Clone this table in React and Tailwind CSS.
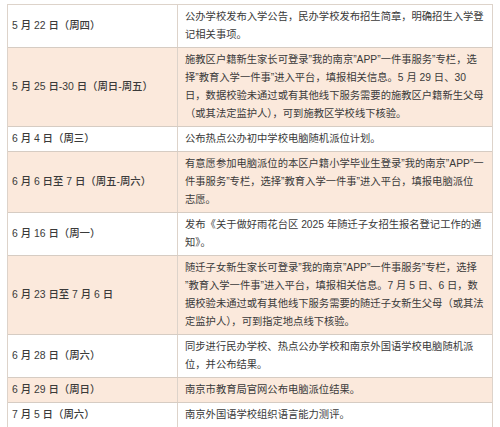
import React from 'react';

const rows = [
  { date: '5 月 22 日（周四）', lines: ['公办学校发布入学公告，民办学校发布招生简章，明确招生入学登', '记相关事项。'] },
  {
    date: '5 月 25 日-30 日（周日-周五）',
    tint: true,
    lines: [
      '施教区户籍新生家长可登录”我的南京”APP”一件事服务”专栏，选',
      '择”教育入学一件事”进入平台，填报相关信息。5 月 29 日、30',
      '日，数据校验未通过或有其他线下服务需要的施教区户籍新生父母',
      '（或其法定监护人），可到施教区学校线下核验。',
    ],
  },
  { date: '6 月 4 日（周三）', lines: ['公布热点公办初中学校电脑随机派位计划。'] },
  {
    date: '6 月 6 日至 7 日（周五-周六）',
    tint: true,
    lines: [
      '有意愿参加电脑派位的本区户籍小学毕业生登录”我的南京”APP”一',
      '件事服务”专栏，选择”教育入学一件事”进入平台，填报电脑派位',
      '志愿。',
    ],
  },
  { date: '6 月 16 日（周一）', lines: ['发布《关于做好雨花台区 2025 年随迁子女招生报名登记工作的通', '知》。'] },
  {
    date: '6 月 23 日至 7 月 6 日',
    tint: true,
    lines: [
      '随迁子女新生家长可登录”我的南京”APP”一件事服务”专栏，选择',
      '”教育入学一件事”进入平台，填报相关信息。7 月 5 日、6 日，数',
      '据校验未通过或有其他线下服务需要的随迁子女新生父母（或其法',
      '定监护人），可到指定地点线下核验。',
    ],
  },
  { date: '6 月 28 日（周六）', lines: ['同步进行民办学校、热点公办学校和南京外国语学校电脑随机派', '位，并公布结果。'] },
  { date: '6 月 29 日（周日）', tint: true, lines: ['南京市教育局官网公布电脑派位结果。'] },
  { date: '7 月 5 日（周六）', lines: ['南京外国语学校组织语言能力测评。'] },
];

const Schedule = () => (
  <div className="w-[500px] h-[427px] bg-white pt-[4px] pl-[7px] overflow-hidden font-['Liberation_Sans','Noto_Sans_CJK_SC',sans-serif] text-[#3a3a3a]">
    <div className="w-[486px] border-t border-l border-r border-[#ddd3ca]">
      {rows.map((r, i) => (
        <div
          key={i}
          className={`grid grid-cols-[170px_1fr] border-b border-[#d6ccc3] ${r.tint ? 'bg-[#fbe9dc]' : 'bg-white'}`}
        >
          <div className="flex items-center pl-[4px] border-r border-[#ddd3ca] text-[10.4px] font-medium whitespace-nowrap">
            {r.date}
          </div>
          <div className="py-[3px] pl-[7px] pr-[4px] text-[10.3px] leading-[18px] whitespace-nowrap">
            {r.lines.map((l, j) => (
              <div key={j}>{l}</div>
            ))}
          </div>
        </div>
      ))}
    </div>
  </div>
);

export default function App() {
  return <Schedule />;
}
